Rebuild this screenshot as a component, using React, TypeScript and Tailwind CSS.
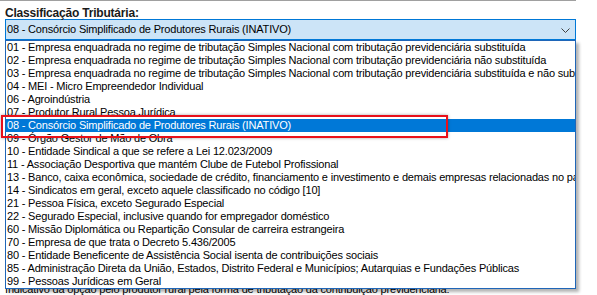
import React from "react";

const items = [
  "01 - Empresa enquadrada no regime de tributação Simples Nacional com tributação previdenciária substituída",
  "02 - Empresa enquadrada no regime de tributação Simples Nacional com tributação previdenciária não substituída",
  "03 - Empresa enquadrada no regime de tributação Simples Nacional com tributação previdenciária substituída e não substituída",
  "04 - MEI - Micro Empreendedor Individual",
  "06 - Agroindústria",
  "07 - Produtor Rural Pessoa Jurídica",
  "08 - Consórcio Simplificado de Produtores Rurais (INATIVO)",
  "09 - Órgão Gestor de Mão de Obra",
  "10 - Entidade Sindical a que se refere a Lei 12.023/2009",
  "11 - Associação Desportiva que mantém Clube de Futebol Profissional",
  "13 - Banco, caixa econômica, sociedade de crédito, financiamento e investimento e demais empresas relacionadas no parágrafo 1º do art. 22 da Lei 8.212/91",
  "14 - Sindicatos em geral, exceto aquele classificado no código [10]",
  "21 - Pessoa Física, exceto Segurado Especial",
  "22 - Segurado Especial, inclusive quando for empregador doméstico",
  "60 - Missão Diplomática ou Repartição Consular de carreira estrangeira",
  "70 - Empresa de que trata o Decreto 5.436/2005",
  "80 - Entidade Beneficente de Assistência Social isenta de contribuições sociais",
  "85 - Administração Direta da União, Estados, Distrito Federal e Municípios; Autarquias e Fundações Públicas",
  "99 - Pessoas Jurídicas em Geral",
];

export default function App() {
  return (
    <div
      className="relative w-[597px] h-[295px] overflow-hidden bg-white text-black text-[11px] leading-[13px] tracking-[-0.18px]"
      style={{ fontFamily: '"Liberation Sans", Arial, sans-serif' }}
    >
      <div className="w-[576px] h-px bg-[#a0a0a0]" />
      <div className="pl-[5px] pt-[5px] h-[18px] text-[12px] leading-[14px] font-bold tracking-[-0.2px] text-[#1a1a1a]">
        Classificação Tributária:
      </div>
      <div className="ml-[5px] w-[571px] h-[21px] border border-[#0078d7] bg-[#cce4f7] flex items-center pl-px pr-[5px]">
        <span className="flex-1 whitespace-nowrap">08 - Consórcio Simplificado de Produtores Rurais (INATIVO)</span>
        <svg width="9" height="5" viewBox="0 0 9 5" className="mt-px">
          <path d="M0.5 0.5 L4.5 4.5 L8.5 0.5" fill="none" stroke="#404040" strokeWidth="1" />
        </svg>
      </div>
      <div className="h-[243px]" />
      <div className="pl-[5px] whitespace-nowrap">
        Indicativo da opção pelo produtor rural pela forma de tributação da contribuição previdenciária:
      </div>

      <div className="absolute left-[5px] top-[40px] w-[571px] border border-[#1f66b8] bg-white shadow-[3px_3px_3px_rgba(0,0,0,0.3)]">
        {items.map((t, i) => (
          <div
            key={i}
            className={
              i === 6
                ? "h-[13px] pl-px whitespace-nowrap overflow-hidden bg-[#0078d7] text-white"
                : "h-[13px] pl-px whitespace-nowrap overflow-hidden"
            }
          >
            {t}
          </div>
        ))}
      </div>

      <div className="absolute left-px top-[115px] w-[447px] h-[23px] border-2 border-[#e8101a] shadow-[0_0_3px_rgba(0,0,0,0.35)]" />
    </div>
  );
}
